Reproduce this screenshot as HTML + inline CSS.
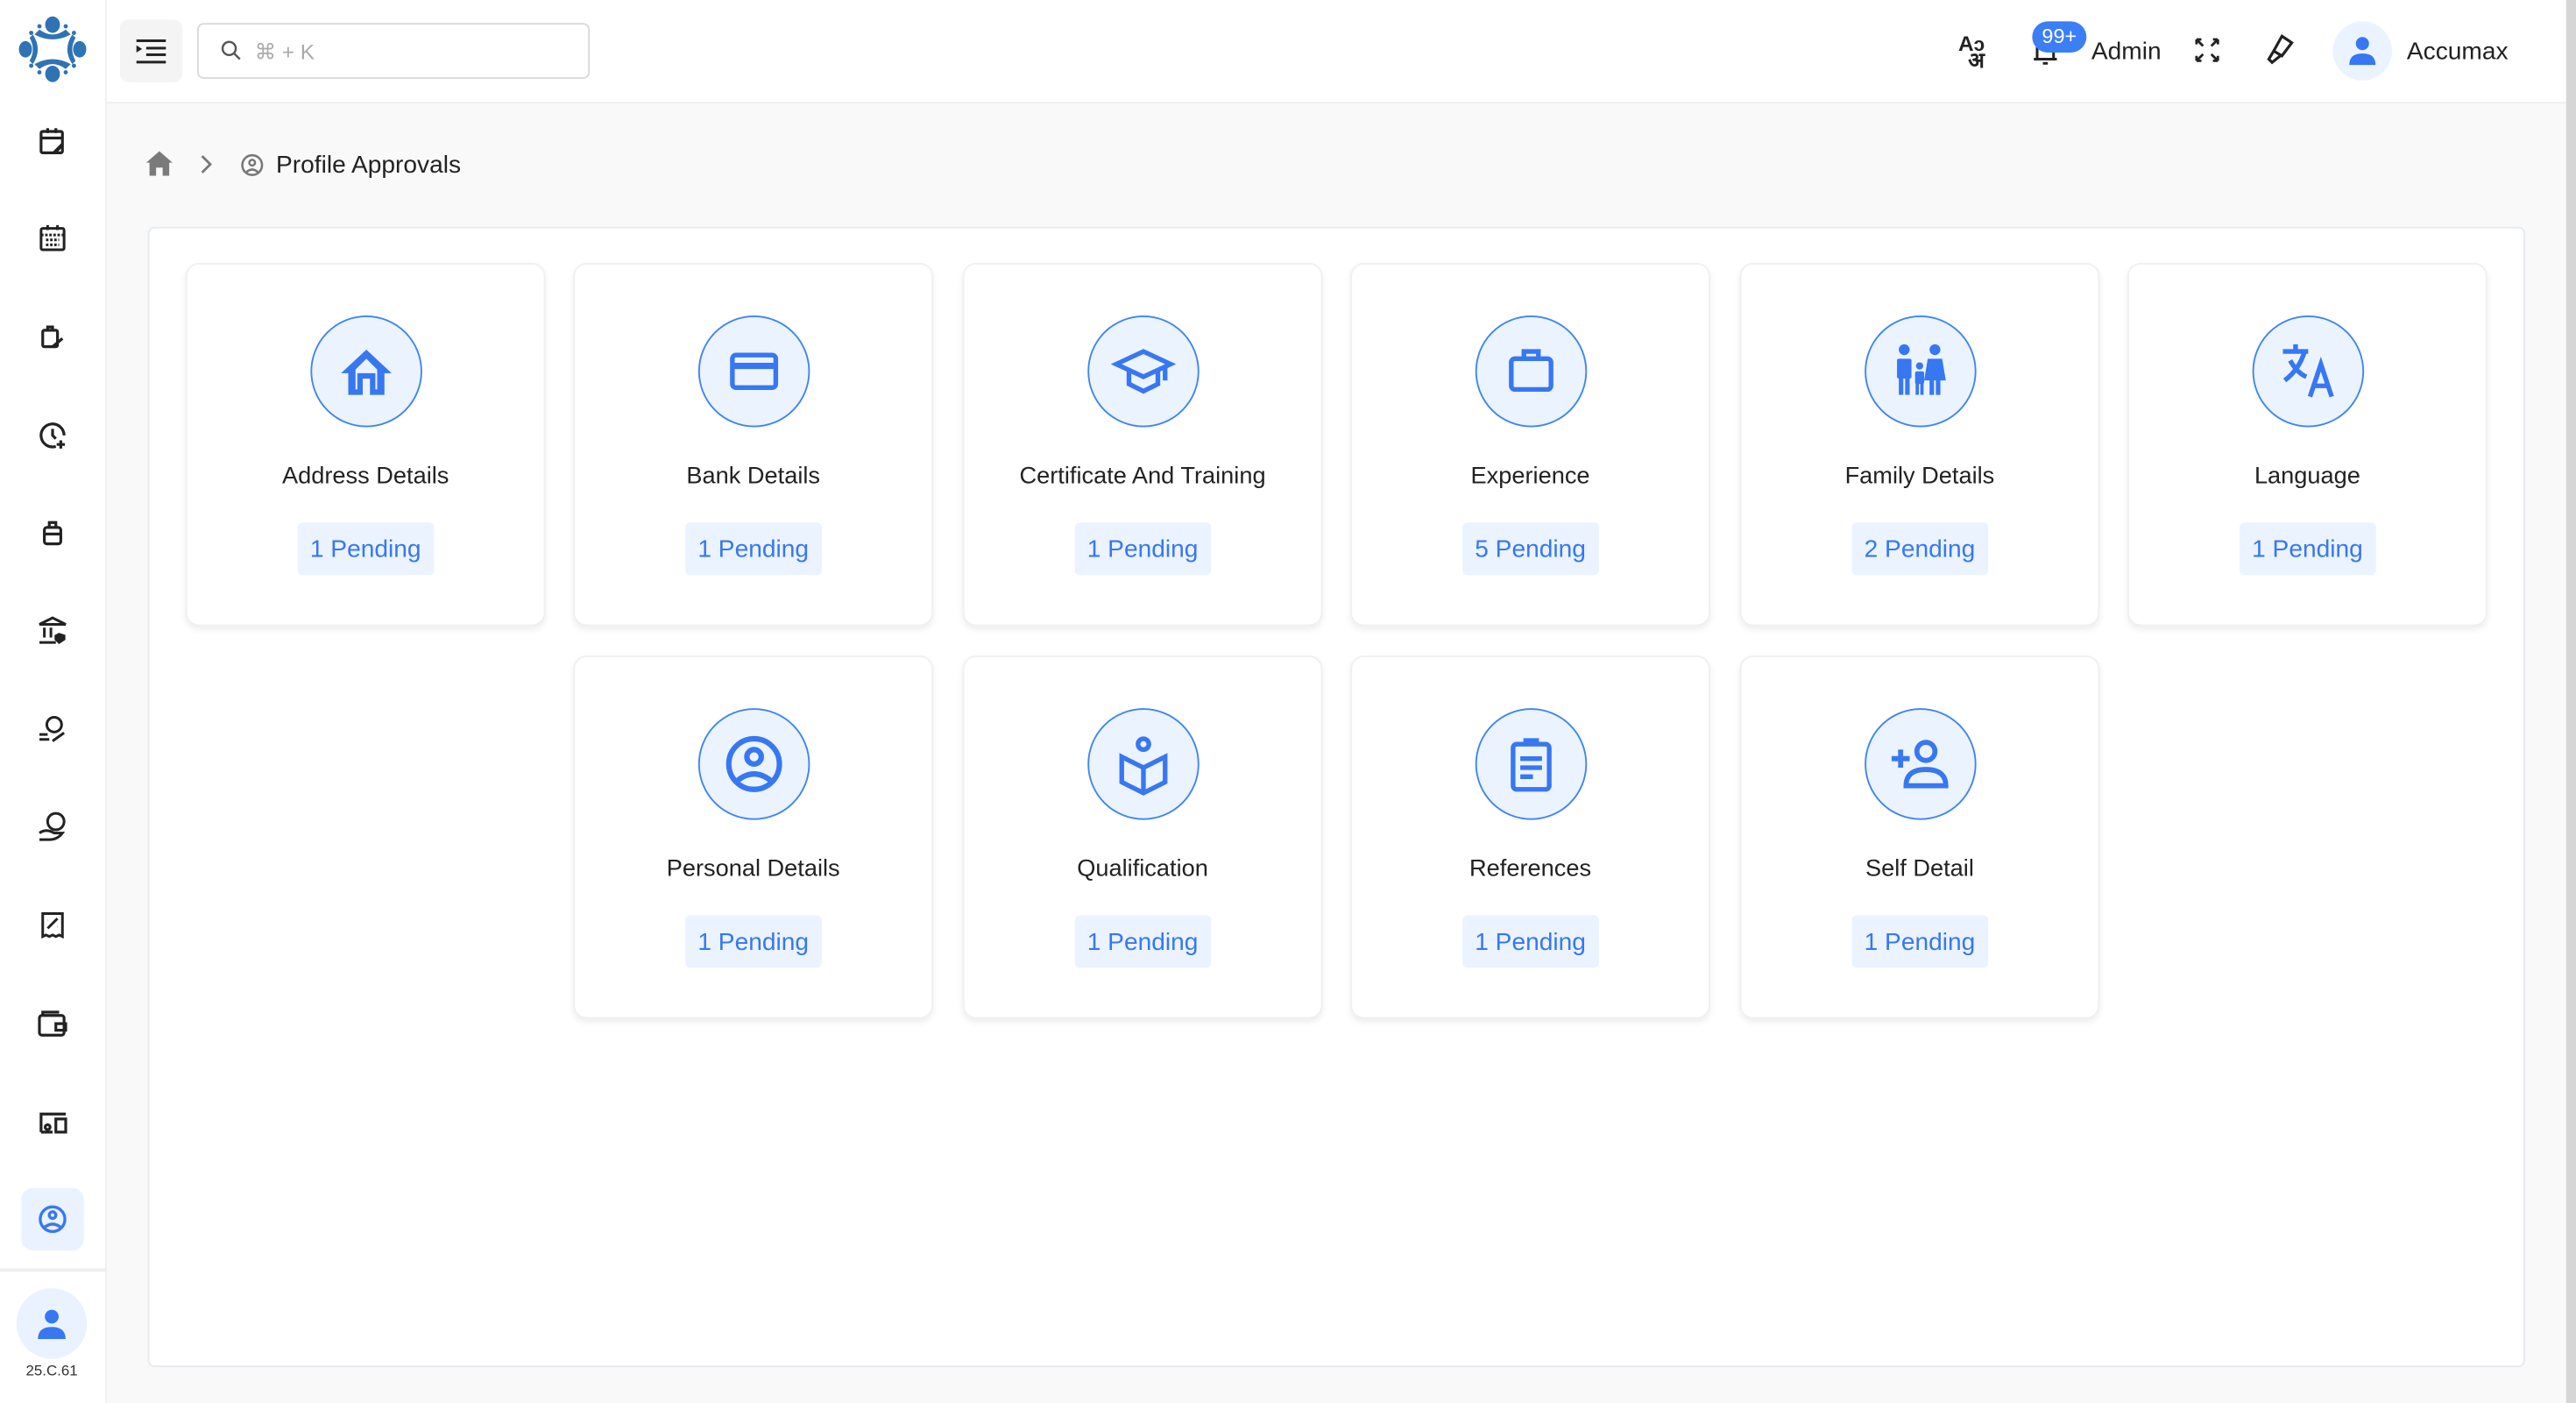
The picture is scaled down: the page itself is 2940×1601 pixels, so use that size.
<!DOCTYPE html>
<html><head><meta charset="utf-8"><style>
*{box-sizing:border-box;margin:0;padding:0}
html,body{width:2940px;height:1600px;overflow:hidden;background:#f9f9f9}
#w{position:absolute;left:0;top:0;width:1568px;height:853.4px;transform:scale(1.875);transform-origin:0 0;font-family:"Liberation Sans",sans-serif;color:#222;background:#f9f9f9}
.abs{position:absolute}
.side{left:0;top:0;width:65px;height:854px;background:#fff;border-right:1px solid #f0f0f0}
.si{position:absolute;left:22px;width:20px;height:20px}
.top{left:65px;top:0;width:1497px;height:63px;background:#fff;border-bottom:1px solid #eee}
.panel{left:90px;top:138px;width:1447px;height:694px;background:#fff;border:1px solid #e6e9ee;border-radius:4px}
.card{position:absolute;width:219px;height:221px;background:#fff;border:1px solid #f0f0f0;border-radius:8px;box-shadow:0 2px 4px rgba(0,0,0,.07)}
.ic{position:absolute;left:75px;top:31px;width:68px;height:68px;border-radius:50%;background:#ebf3ff;border:1px solid #3f85f2;display:flex;align-items:center;justify-content:center}
.ic svg{transform:scale(1.1)}
.t{position:absolute;left:0;right:0;top:121px;text-align:center;font-size:14.5px;color:#222}
.b{position:absolute;left:50%;transform:translateX(-50%);top:157px;height:32px;padding:0 8px;background:#eaf3ff;border-radius:3px;color:#3777f2;font-size:15px;line-height:33px;white-space:nowrap}
svg{display:block}
</style></head><body><div id="w">
<div class="abs side">
<svg class="abs" style="left:10px;top:8px" width="44" height="44" viewBox="0 0 44 44" fill="#2f73b4"><ellipse cx="22" cy="7" rx="4.5" ry="5"/><ellipse cx="22" cy="37" rx="4.5" ry="5"/><ellipse cx="5.5" cy="22" rx="4" ry="5"/><ellipse cx="38.5" cy="22" rx="4" ry="5"/><path d="M14 10q8 6 16 0l3 3q-11 6 -22 0z"/><path d="M14 34q8 -6 16 0l3 -3q-11 -6 -22 0z"/><path d="M10 13q6 9 0 18l-2-2q4-7 0-14z"/><path d="M34 13q-6 9 0 18l2-2q-4-7 0-14z"/><circle cx="14" cy="8" r="1.3"/><circle cx="30" cy="8" r="1.3"/><circle cx="14" cy="36" r="1.3"/><circle cx="30" cy="36" r="1.3"/><circle cx="9" cy="12" r="1.3"/><circle cx="35" cy="12" r="1.3"/><circle cx="9" cy="32" r="1.3"/><circle cx="35" cy="32" r="1.3"/></svg>
<svg class="si" style="top:76px" viewBox="0 0 20 20" fill="none" stroke="#222" stroke-width="1.7"><rect x="3" y="4" width="13" height="13" rx="1"/><path d="M3 8h13M7 2v3M12 2v3"/><path d="M11 17l5-5" stroke-width="2.2"/></svg>
<svg class="si" style="top:135px" viewBox="0 0 20 20" fill="none" stroke="#222" stroke-width="1.6"><rect x="3" y="4" width="14" height="13" rx="1"/><path d="M3 8h14M7 2v3M13 2v3M6 11h8M6 14h8" stroke-dasharray="1.5 1"/></svg>
<svg class="si" style="top:195px" viewBox="0 0 20 20" fill="none" stroke="#222" stroke-width="1.7"><rect x="4" y="6" width="9" height="10" rx="1"/><path d="M7 6V4h3v2M10 16l6-5"/></svg>
<svg class="si" style="top:255px" viewBox="0 0 20 20" fill="none" stroke="#222" stroke-width="1.7"><path d="M17 10a7 7 0 1 0-5 6.7"/><path d="M10 6v4l2 2M15 13v5M12.5 15.5h5"/></svg>
<svg class="si" style="top:314px" viewBox="0 0 20 20" fill="none" stroke="#222" stroke-width="1.7"><rect x="5" y="7" width="10" height="10" rx="1.5"/><path d="M8 7V4h4v3M5 11h10"/></svg>
<svg class="si" style="top:374px" viewBox="0 0 20 20" fill="none" stroke="#222" stroke-width="1.6"><path d="M2 6l8-4 8 4zM2 17h10M5 8v6M9 8v6"/><path d="M14 12l3 1v2l-3 2-2-2v-2z" fill="#222"/></svg>
<svg class="si" style="top:434px" viewBox="0 0 20 20" fill="none" stroke="#222" stroke-width="1.6"><circle cx="11" cy="7" r="4.5"/><path d="M2 13h5M2 16h6M10 17l7-5"/></svg>
<svg class="si" style="top:493px" viewBox="0 0 20 20" fill="none" stroke="#222" stroke-width="1.6"><circle cx="12" cy="7" r="5"/><path d="M2 14q4-3 9 0h5q-3 4-8 4H2"/></svg>
<svg class="si" style="top:553px" viewBox="0 0 20 20" fill="none" stroke="#222" stroke-width="1.6"><path d="M4 3h12v14l-2-1-2 1-2-1-2 1-2-1-2 1z"/><path d="M7 12l6-6M7 7h.1M13 11h.1"/></svg>
<svg class="si" style="top:613px" viewBox="0 0 20 20" fill="none" stroke="#222" stroke-width="1.7"><rect x="2" y="5" width="15" height="12" rx="1.5"/><path d="M4 5V3h10M12 10h6v4h-6z"/></svg>
<svg class="si" style="top:673px" viewBox="0 0 20 20" fill="none" stroke="#222" stroke-width="1.7"><path d="M3 16V5h15M3 16h7"/><rect x="12" y="8" width="6" height="8"/><circle cx="7" cy="13" r="1.5"/></svg>
<div class="abs" style="left:13px;top:723px;width:38px;height:38px;background:#e9f2fe;border-radius:7px"></div>
<svg class="si" style="top:732px" viewBox="0 0 20 20" fill="none" stroke="#3777f2" stroke-width="1.8"><circle cx="10" cy="10" r="7.5"/><circle cx="10" cy="7.5" r="2"/><path d="M5 15q5-4 10 0"/></svg>
<div class="abs" style="left:0;top:772px;width:65px;height:2px;background:#eee"></div>
<div class="abs" style="left:10px;top:784px;width:43px;height:43px;border-radius:50%;background:#e9f2fe"></div>
<svg class="abs" style="left:21px;top:795px" width="21" height="21" viewBox="0 0 20 20" fill="#3777f2"><circle cx="10" cy="6" r="4"/><path d="M2 19q0-7 8-7t8 7z"/></svg>
<div class="abs" style="left:0;top:829px;width:63px;text-align:center;font-size:9px;color:#333">25.C.61</div>
</div>
<div class="abs top">
<div class="abs" style="left:8px;top:12px;width:38px;height:38px;background:#f4f4f4;border-radius:5px"></div>
<svg class="abs" style="left:18px;top:23px" width="18" height="16" viewBox="0 0 18 16" fill="#222"><rect x="0" y="1" width="18" height="1.6"/><rect x="6" y="5.5" width="12" height="1.6"/><rect x="6" y="9.5" width="12" height="1.6"/><rect x="0" y="14" width="18" height="1.6"/><path d="M0 4.5l3.5 2.3L0 9z"/></svg>
<div class="abs" style="left:55px;top:14px;width:239px;height:34px;border:1px solid #d9d9d9;border-radius:4px"></div>
<svg class="abs" style="left:69px;top:24px" width="13" height="13" viewBox="0 0 13 13" fill="none" stroke="#555" stroke-width="1.3"><circle cx="5.5" cy="5.5" r="4"/><path d="M8.5 8.5L12 12"/></svg>
<div class="abs" style="left:90px;top:24px;font-size:13px;color:#aaa">⌘ + K</div>
<div class="abs" style="left:1127px;top:22px;font-size:13px;font-weight:bold;line-height:10px;color:#222">A<span style="font-size:12px;font-family:'Noto Sans CJK JP',sans-serif">ɔ</span><br><span style="margin-left:6px;font-family:'DejaVu Sans',sans-serif">अ</span></div>
<svg class="abs" style="left:1172px;top:22px" width="16" height="18" viewBox="0 0 16 18" fill="none" stroke="#222" stroke-width="1.6"><path d="M3 14V7a5 5 0 0 1 10 0v7M1 14h14M6.5 16.5h3"/></svg>
<div class="abs" style="left:1172px;top:13px;width:33px;height:19px;border-radius:10px;background:#3b7ef6;color:#fff;font-size:12.5px;text-align:center;line-height:19px">99+</div>
<div class="abs" style="left:1208px;top:23px;font-size:15px;color:#222">Admin</div>
<svg class="abs" style="left:1271px;top:23px" width="15" height="15" viewBox="0 0 15 15" fill="none" stroke="#222" stroke-width="1.5"><path d="M1 1l4 4M14 1l-4 4M1 14l4-4M14 14l-4-4M1 1h3M1 1v3M14 1h-3M14 1v3M1 14h3M1 14v-3M14 14h-3M14 14v-3"/></svg>
<svg class="abs" style="left:1313px;top:20px" width="20" height="20" viewBox="0 0 20 20" fill="none" stroke="#222" stroke-width="1.7"><path d="M11 2l6 4-6 8-5-3zM6 11l-3 5 2 2 5-4"/></svg>
<div class="abs" style="left:1355px;top:13px;width:36px;height:36px;border-radius:50%;background:#eaf3ff"></div>
<svg class="abs" style="left:1363px;top:20px" width="20" height="21" viewBox="0 0 20 20" fill="#3777f2"><circle cx="10" cy="6" r="4"/><path d="M2 19q0-7 8-7t8 7z"/></svg>
<div class="abs" style="left:1400px;top:23px;font-size:15px;color:#222">Accumax</div>
</div>
<div class="abs" style="left:1562px;top:0;width:6px;height:854px;background:#d6d6d6"></div>
<svg class="abs" style="left:89px;top:92px" width="16" height="15" viewBox="0 0 16 15" fill="#7a7a7a"><path d="M8 0l8 7h-2v8h-4v-5H6v5H2V7H0z"/></svg>
<svg class="abs" style="left:121px;top:94px" width="8" height="12" viewBox="0 0 8 12" fill="none" stroke="#777" stroke-width="1.5"><path d="M2 1l5 5-5 5"/></svg>
<svg class="abs" style="left:146px;top:93px" width="15" height="15" viewBox="0 0 20 20" fill="none" stroke="#777" stroke-width="1.8"><circle cx="10" cy="10" r="8"/><circle cx="10" cy="8" r="2.3"/><path d="M5 16q5-5 10 0"/></svg>
<div class="abs" style="left:168px;top:92px;font-size:15px;color:#222">Profile Approvals</div>
<div class="abs panel"></div>

<div class="card" style="left:113px;top:160px"><div class="ic"><svg width="34" height="34" viewBox="0 0 34 34" fill="#3777f2"><path d="M17 5L3 18h4v12h8v-9h4v9h8V18h4zM11 16l6-6 6 6v11h-1v-9h-10v9h-1z"/></svg></div><div class="t">Address Details</div><div class="b">1 Pending</div></div>
<div class="card" style="left:349px;top:160px"><div class="ic"><svg width="36" height="36" viewBox="0 0 36 36" fill="none" stroke="#3777f2" stroke-width="2.6"><rect x="6" y="9" width="24" height="18" rx="2"/><path d="M6 15h24" stroke-width="3.5"/></svg></div><div class="t">Bank Details</div><div class="b">1 Pending</div></div>
<div class="card" style="left:586px;top:160px"><div class="ic"><svg width="36" height="36" viewBox="0 0 36 36" fill="none" stroke="#3777f2" stroke-width="2.6"><path d="M3 14l15-7 15 7-15 7z"/><path d="M10 18v7l8 4 8-4v-7M30 15v8"/></svg></div><div class="t">Certificate And Training</div><div class="b">1 Pending</div></div>
<div class="card" style="left:822px;top:160px"><div class="ic"><svg width="36" height="36" viewBox="0 0 36 36" fill="none" stroke="#3777f2" stroke-width="2.6"><rect x="7" y="11" width="22" height="17" rx="2"/><path d="M14 11V7h8v4"/></svg></div><div class="t">Experience</div><div class="b">5 Pending</div></div>
<div class="card" style="left:1059px;top:160px"><div class="ic"><svg width="38" height="38" viewBox="0 0 38 38" fill="#3777f2"><circle cx="10" cy="7" r="3"/><circle cx="27" cy="7" r="3"/><rect x="6" y="12" width="8" height="11" rx="1"/><rect x="7" y="22" width="2.5" height="10"/><rect x="10.5" y="22" width="2.5" height="10"/><path d="M23 12h8l2 12h-3v8h-2.5v-8h-1v8H24v-8h-3z"/><circle cx="18.5" cy="16" r="2"/><rect x="16" y="19" width="5" height="7" rx="1"/><rect x="16.3" y="25" width="1.8" height="7"/><rect x="18.9" y="25" width="1.8" height="7"/></svg></div><div class="t">Family Details</div><div class="b">2 Pending</div></div>
<div class="card" style="left:1295px;top:160px"><div class="ic"><svg width="38" height="38" viewBox="0 0 38 38" fill="none" stroke="#3777f2" stroke-width="2.6"><path d="M5 8h14M12 4v4M17 8q-3 10 -11 16M9 13q4 7 9 9M20 33l6-18 6 18M22 27h8"/></svg></div><div class="t">Language</div><div class="b">1 Pending</div></div>

<div class="card" style="left:349px;top:399px"><div class="ic"><svg width="36" height="36" viewBox="0 0 36 36" fill="none" stroke="#3777f2" stroke-width="3"><circle cx="18" cy="18" r="14"/><circle cx="18" cy="14" r="4"/><path d="M9 27q9-7 18 0"/></svg></div><div class="t">Personal Details</div><div class="b">1 Pending</div></div>
<div class="card" style="left:586px;top:399px"><div class="ic"><svg width="36" height="36" viewBox="0 0 36 36" fill="none" stroke="#3777f2" stroke-width="2.6"><circle cx="18" cy="7" r="3"/><path d="M6 14l12 6 12-6v14l-12 6-12-6z"/><path d="M18 20v14"/></svg></div><div class="t">Qualification</div><div class="b">1 Pending</div></div>
<div class="card" style="left:822px;top:399px"><div class="ic"><svg width="36" height="36" viewBox="0 0 36 36" fill="none" stroke="#3777f2" stroke-width="2.6"><rect x="8" y="7" width="20" height="25" rx="2"/><path d="M15 7V5h6v2M12 15h12M12 20h12M12 25h7"/></svg></div><div class="t">References</div><div class="b">1 Pending</div></div>
<div class="card" style="left:1059px;top:399px"><div class="ic"><svg width="40" height="40" viewBox="0 0 40 40" fill="none" stroke="#3777f2" stroke-width="2.8"><circle cx="23" cy="13" r="5"/><path d="M12 32q0-9 11-9t11 9z"/><path d="M9 12v10M4 17h10"/></svg></div><div class="t">Self Detail</div><div class="b">1 Pending</div></div>
</div></body></html>
